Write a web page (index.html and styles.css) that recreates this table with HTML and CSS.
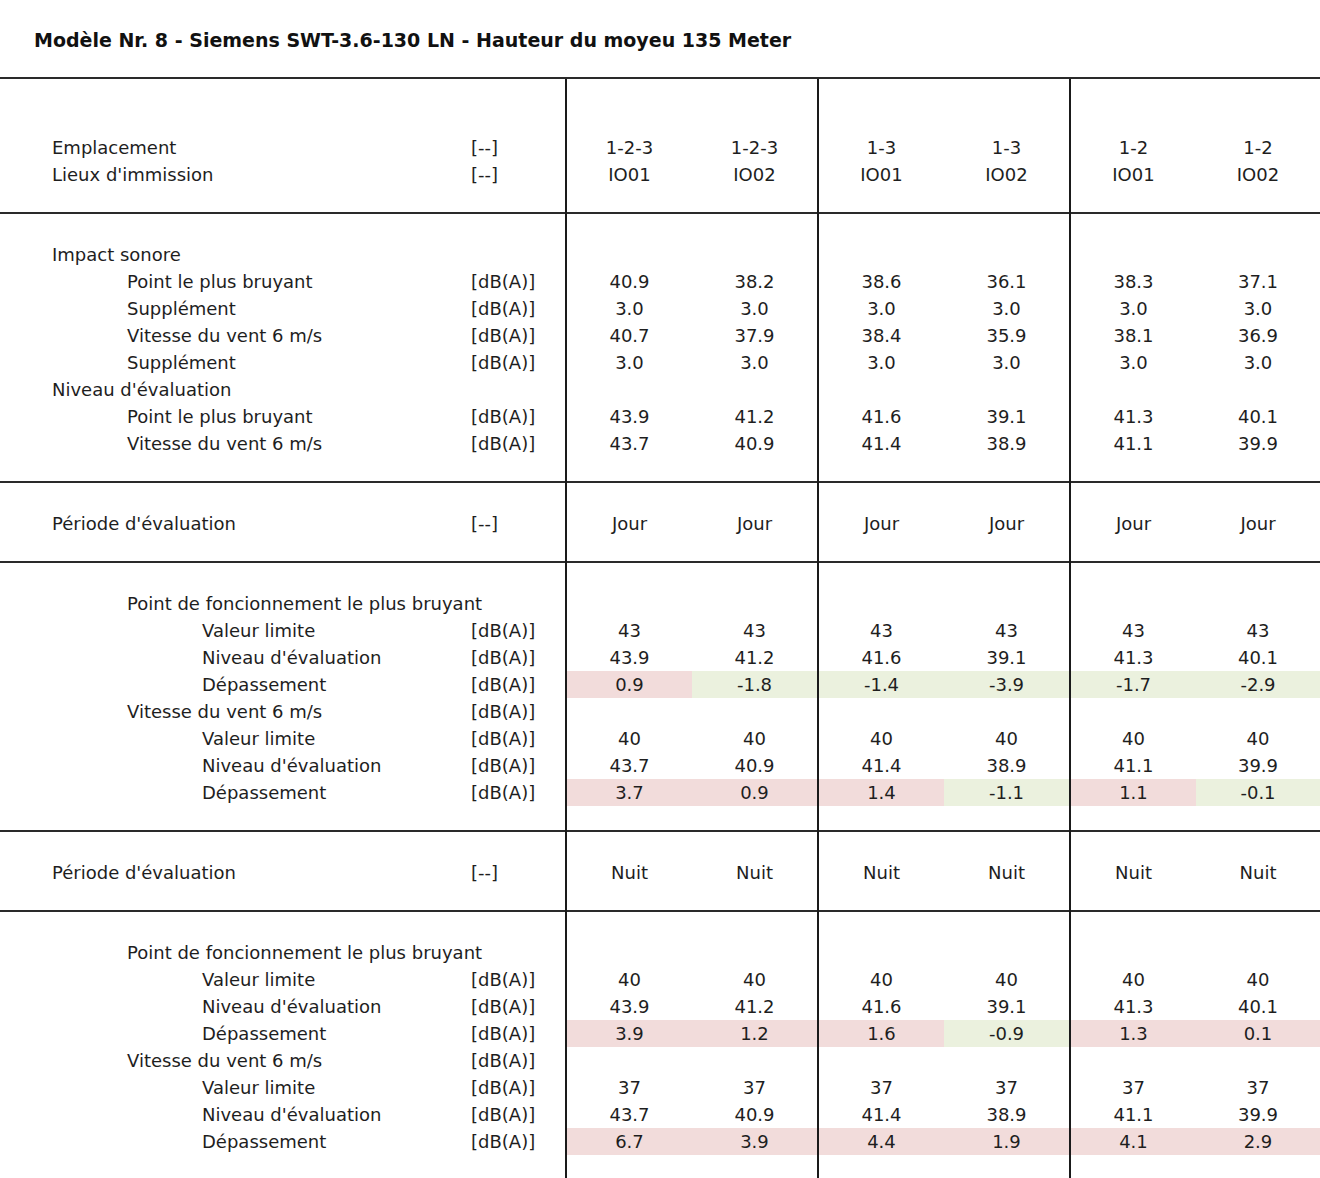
FILE: index.html
```html
<!DOCTYPE html>
<html lang="fr">
<head>
  <meta charset="UTF-8">
  <title>Modèle Nr. 8 - Siemens SWT-3.6-130 LN</title>
  <link rel="stylesheet" href="styles.css">
</head>
<body>
  <div class="title">Modèle Nr. 8 - Siemens SWT-3.6-130 LN - Hauteur du moyeu 135 Meter</div>

  <table class="report">
    <colgroup>
      <col class="c-lbl">
      <col class="c-unit">
      <col class="c-val"><col class="c-val">
      <col class="c-val"><col class="c-val">
      <col class="c-val"><col class="c-last">
    </colgroup>

    <!-- En-tête : emplacements et lieux d'immission -->
    <tbody>
      <tr class="top"><td colspan="2"></td><td colspan="2" class="g"></td><td colspan="2" class="g"></td><td colspan="2" class="g"></td></tr>
      <tr class="line"><td colspan="2"></td><td colspan="2" class="g"></td><td colspan="2" class="g"></td><td colspan="2" class="g"></td></tr>
      <tr class="line"><td class="lbl">Emplacement</td><td class="unit">[--]</td><td class="g">1-2-3</td><td>1-2-3</td><td class="g">1-3</td><td>1-3</td><td class="g">1-2</td><td>1-2</td></tr>
      <tr class="line"><td class="lbl">Lieux d'immission</td><td class="unit">[--]</td><td class="g">IO01</td><td>IO02</td><td class="g">IO01</td><td>IO02</td><td class="g">IO01</td><td>IO02</td></tr>
      <tr class="bot"><td colspan="2"></td><td colspan="2" class="g"></td><td colspan="2" class="g"></td><td colspan="2" class="g"></td></tr>
    </tbody>

    <!-- Impact sonore -->
    <tbody>
      <tr class="top"><td colspan="2"></td><td colspan="2" class="g"></td><td colspan="2" class="g"></td><td colspan="2" class="g"></td></tr>
      <tr class="line"><td class="lbl">Impact sonore</td><td class="unit"></td><td class="g"></td><td></td><td class="g"></td><td></td><td class="g"></td><td></td></tr>
      <tr class="line"><td class="lbl l1">Point le plus bruyant</td><td class="unit">[dB(A)]</td><td class="g">40.9</td><td>38.2</td><td class="g">38.6</td><td>36.1</td><td class="g">38.3</td><td>37.1</td></tr>
      <tr class="line"><td class="lbl l1">Supplément</td><td class="unit">[dB(A)]</td><td class="g">3.0</td><td>3.0</td><td class="g">3.0</td><td>3.0</td><td class="g">3.0</td><td>3.0</td></tr>
      <tr class="line"><td class="lbl l1">Vitesse du vent 6 m/s</td><td class="unit">[dB(A)]</td><td class="g">40.7</td><td>37.9</td><td class="g">38.4</td><td>35.9</td><td class="g">38.1</td><td>36.9</td></tr>
      <tr class="line"><td class="lbl l1">Supplément</td><td class="unit">[dB(A)]</td><td class="g">3.0</td><td>3.0</td><td class="g">3.0</td><td>3.0</td><td class="g">3.0</td><td>3.0</td></tr>
      <tr class="line"><td class="lbl">Niveau d'évaluation</td><td class="unit"></td><td class="g"></td><td></td><td class="g"></td><td></td><td class="g"></td><td></td></tr>
      <tr class="line"><td class="lbl l1">Point le plus bruyant</td><td class="unit">[dB(A)]</td><td class="g">43.9</td><td>41.2</td><td class="g">41.6</td><td>39.1</td><td class="g">41.3</td><td>40.1</td></tr>
      <tr class="line"><td class="lbl l1">Vitesse du vent 6 m/s</td><td class="unit">[dB(A)]</td><td class="g">43.7</td><td>40.9</td><td class="g">41.4</td><td>38.9</td><td class="g">41.1</td><td>39.9</td></tr>
      <tr class="bot"><td colspan="2"></td><td colspan="2" class="g"></td><td colspan="2" class="g"></td><td colspan="2" class="g"></td></tr>
    </tbody>

    <!-- Période : jour -->
    <tbody>
      <tr class="top"><td colspan="2"></td><td colspan="2" class="g"></td><td colspan="2" class="g"></td><td colspan="2" class="g"></td></tr>
      <tr class="line"><td class="lbl">Période d'évaluation</td><td class="unit">[--]</td><td class="g">Jour</td><td>Jour</td><td class="g">Jour</td><td>Jour</td><td class="g">Jour</td><td>Jour</td></tr>
      <tr class="bot"><td colspan="2"></td><td colspan="2" class="g"></td><td colspan="2" class="g"></td><td colspan="2" class="g"></td></tr>
    </tbody>

    <tbody>
      <tr class="top"><td colspan="2"></td><td colspan="2" class="g"></td><td colspan="2" class="g"></td><td colspan="2" class="g"></td></tr>
      <tr class="line"><td class="lbl l1" colspan="2">Point de foncionnement le plus bruyant</td><td class="g"></td><td></td><td class="g"></td><td></td><td class="g"></td><td></td></tr>
      <tr class="line"><td class="lbl l2">Valeur limite</td><td class="unit">[dB(A)]</td><td class="g">43</td><td>43</td><td class="g">43</td><td>43</td><td class="g">43</td><td>43</td></tr>
      <tr class="line"><td class="lbl l2">Niveau d'évaluation</td><td class="unit">[dB(A)]</td><td class="g">43.9</td><td>41.2</td><td class="g">41.6</td><td>39.1</td><td class="g">41.3</td><td>40.1</td></tr>
      <tr class="line"><td class="lbl l2">Dépassement</td><td class="unit">[dB(A)]</td><td class="g over">0.9</td><td class="under">-1.8</td><td class="g under">-1.4</td><td class="under">-3.9</td><td class="g under">-1.7</td><td class="under">-2.9</td></tr>
      <tr class="line"><td class="lbl l1">Vitesse du vent 6 m/s</td><td class="unit">[dB(A)]</td><td class="g"></td><td></td><td class="g"></td><td></td><td class="g"></td><td></td></tr>
      <tr class="line"><td class="lbl l2">Valeur limite</td><td class="unit">[dB(A)]</td><td class="g">40</td><td>40</td><td class="g">40</td><td>40</td><td class="g">40</td><td>40</td></tr>
      <tr class="line"><td class="lbl l2">Niveau d'évaluation</td><td class="unit">[dB(A)]</td><td class="g">43.7</td><td>40.9</td><td class="g">41.4</td><td>38.9</td><td class="g">41.1</td><td>39.9</td></tr>
      <tr class="line"><td class="lbl l2">Dépassement</td><td class="unit">[dB(A)]</td><td class="g over">3.7</td><td class="over">0.9</td><td class="g over">1.4</td><td class="under">-1.1</td><td class="g over">1.1</td><td class="under">-0.1</td></tr>
      <tr class="bot"><td colspan="2"></td><td colspan="2" class="g"></td><td colspan="2" class="g"></td><td colspan="2" class="g"></td></tr>
    </tbody>

    <!-- Période : nuit -->
    <tbody>
      <tr class="top"><td colspan="2"></td><td colspan="2" class="g"></td><td colspan="2" class="g"></td><td colspan="2" class="g"></td></tr>
      <tr class="line"><td class="lbl">Période d'évaluation</td><td class="unit">[--]</td><td class="g">Nuit</td><td>Nuit</td><td class="g">Nuit</td><td>Nuit</td><td class="g">Nuit</td><td>Nuit</td></tr>
      <tr class="bot"><td colspan="2"></td><td colspan="2" class="g"></td><td colspan="2" class="g"></td><td colspan="2" class="g"></td></tr>
    </tbody>

    <tbody>
      <tr class="top"><td colspan="2"></td><td colspan="2" class="g"></td><td colspan="2" class="g"></td><td colspan="2" class="g"></td></tr>
      <tr class="line"><td class="lbl l1" colspan="2">Point de foncionnement le plus bruyant</td><td class="g"></td><td></td><td class="g"></td><td></td><td class="g"></td><td></td></tr>
      <tr class="line"><td class="lbl l2">Valeur limite</td><td class="unit">[dB(A)]</td><td class="g">40</td><td>40</td><td class="g">40</td><td>40</td><td class="g">40</td><td>40</td></tr>
      <tr class="line"><td class="lbl l2">Niveau d'évaluation</td><td class="unit">[dB(A)]</td><td class="g">43.9</td><td>41.2</td><td class="g">41.6</td><td>39.1</td><td class="g">41.3</td><td>40.1</td></tr>
      <tr class="line"><td class="lbl l2">Dépassement</td><td class="unit">[dB(A)]</td><td class="g over">3.9</td><td class="over">1.2</td><td class="g over">1.6</td><td class="under">-0.9</td><td class="g over">1.3</td><td class="over">0.1</td></tr>
      <tr class="line"><td class="lbl l1">Vitesse du vent 6 m/s</td><td class="unit">[dB(A)]</td><td class="g"></td><td></td><td class="g"></td><td></td><td class="g"></td><td></td></tr>
      <tr class="line"><td class="lbl l2">Valeur limite</td><td class="unit">[dB(A)]</td><td class="g">37</td><td>37</td><td class="g">37</td><td>37</td><td class="g">37</td><td>37</td></tr>
      <tr class="line"><td class="lbl l2">Niveau d'évaluation</td><td class="unit">[dB(A)]</td><td class="g">43.7</td><td>40.9</td><td class="g">41.4</td><td>38.9</td><td class="g">41.1</td><td>39.9</td></tr>
      <tr class="line"><td class="lbl l2">Dépassement</td><td class="unit">[dB(A)]</td><td class="g over">6.7</td><td class="over">3.9</td><td class="g over">4.4</td><td class="over">1.9</td><td class="g over">4.1</td><td class="over">2.9</td></tr>
      <tr class="bot"><td colspan="2"></td><td colspan="2" class="g"></td><td colspan="2" class="g"></td><td colspan="2" class="g"></td></tr>
    </tbody>
  </table>
</body>
</html>
```

FILE: styles.css
```css
/* Reset */
* {
  margin: 0;
  padding: 0;
  box-sizing: border-box;
}
body {
  font-family: "DejaVu Sans", Verdana, sans-serif;
  font-size: 18px;
  color: #1e1e1e;
  background-color: #fff;
  width: 1320px;
}

/* Titre du modèle */
.title {
  height: 79px;
  padding: 3px 0 0 34px;
  line-height: 75px;
  font-size: 19px;
  font-weight: bold;
  color: #111;
  border-bottom: 2px solid #2a2a2a;
}

/* Tableau des résultats */
.report {
  width: 1320px;
  border-collapse: collapse;
  table-layout: fixed;
}
.c-lbl { width: 471px; }
.c-unit { width: 95px; }
.c-val { width: 126px; }
.c-last { width: 124px; }

.report tbody + tbody {
  border-top: 2px solid #2a2a2a;
}
.report td {
  padding: 0;
  text-align: center;
  white-space: nowrap;
}
.report tr.line td {
  height: 27px;
  line-height: 27px;
}
.report tr.top td {
  height: 28px;
}
.report tr.bot td {
  height: 25px;
}
.report td.g {
  border-left: 2px solid #1a1a1a;
}
.report td.lbl {
  text-align: left;
  padding-left: 52px;
}
.report td.l1 {
  padding-left: 127px;
}
.report td.l2 {
  padding-left: 202px;
}
.report td.unit {
  text-align: left;
}

/* Dépassement : rouge si > 0, vert sinon */
.over {
  background-color: #f2dcdb;
}
.under {
  background-color: #ebf1de;
}
```
